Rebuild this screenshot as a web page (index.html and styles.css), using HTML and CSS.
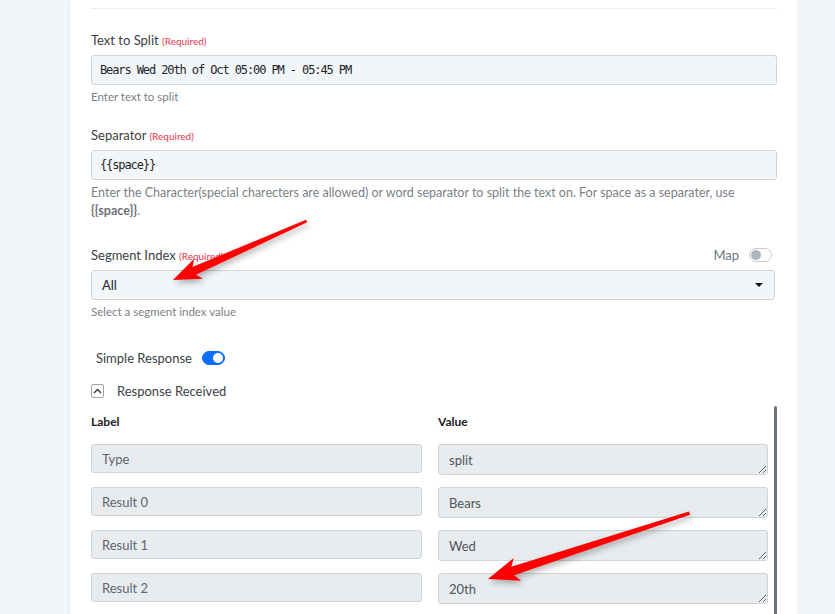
FILE: index.html
```html
<!DOCTYPE html>
<html lang="en">
<head>
  <meta charset="UTF-8">
  <meta name="viewport" content="width=device-width, initial-scale=1.0">
  <title>Text Splitter - Settings</title>
  <link rel="stylesheet" href="styles.css">
</head>
<body>
  <div class="panel">
    <div class="divider"></div>

    <div class="field">
      <div class="field-label">Text to Split <span class="req">(Required)</span></div>
      <div class="text-input mono">Bears Wed 20th of Oct 05:00 PM - 05:45 PM</div>
      <div class="hint">Enter text to split</div>
    </div>

    <div class="field field-sep">
      <div class="field-label">Separator <span class="req">(Required)</span></div>
      <div class="text-input mono">{{space}}</div>
      <div class="hint hint-long">Enter the Character(special charecters are allowed) or word separator to split the text on. For space as a separater, use <b>{{space}}</b>.</div>
    </div>

    <div class="field field-index">
      <div class="field-label label-row">
        <span>Segment Index <span class="req">(Required)</span></span>
        <span class="map">Map <span class="toggle"></span></span>
      </div>
      <div class="text-input select">All <span class="caret"></span></div>
      <div class="hint">Select a segment index value</div>
    </div>

    <div class="switch-row">
      Simple Response <span class="toggle on"></span>
    </div>

    <div class="collapse-row">
      <span class="chevron-box">
        <svg width="9" height="6" viewBox="0 0 9 6"><path d="M1 5 L4.5 1.5 L8 5" fill="none" stroke="#333" stroke-width="1.4"/></svg>
      </span>
      Response Received
    </div>

    <div class="response">
      <div class="response-grid">
        <div class="col-head">Label</div>
        <div class="col-head">Value</div>

        <div class="cell">Type</div>
        <textarea class="cell-value" readonly>split</textarea>

        <div class="cell">Result 0</div>
        <textarea class="cell-value" readonly>Bears</textarea>

        <div class="cell">Result 1</div>
        <textarea class="cell-value" readonly>Wed</textarea>

        <div class="cell">Result 2</div>
        <textarea class="cell-value" readonly>20th</textarea>
      </div>
      <div class="scroll-thumb"></div>
    </div>
  </div>

  <!-- callout arrows -->
  <svg class="arrows" width="835" height="614" viewBox="0 0 835 614">
    <g transform="translate(173 280) rotate(-23.8)">
      <polygon points="0,0 28,-11 23,-4 146,-1.4 146,1.4 23,4.5 28,11" fill="#ff0000"/>
    </g>
    <g transform="translate(488 579) rotate(-18.1)">
      <polygon points="0,0 31,-12 26,-4.5 212,-1.6 212,1.6 26,4.5 31,12" fill="#ff0000"/>
    </g>
  </svg>
</body>
</html>
```

FILE: styles.css
```css
body {
  margin: 0;
  position: relative;
  font-family: Lato, 'Open Sans', Arial, sans-serif;
  background: #f3f6f9;
  color: #3a3f44;
  overflow: hidden;
}

.panel {
  margin-left: 70px;
  width: 727px;
  min-height: 614px;
  box-sizing: border-box;
  padding: 8px 20px 0 21px;
  background: white;
  box-shadow: -1px 0 2px rgba(0,0,0,0.06);
}

.divider {
  height: 1px;
  background: #e6eef6;
  margin-bottom: 22px;
}

.field {
  margin-bottom: 21px;
}

.field-sep {
  margin-bottom: 26px;
}

.field-index {
  margin-bottom: 29px;
}

.field-label {
  font-size: 13px;
  line-height: 18px;
  height: 18px;
  margin-bottom: 6px;
  color: #3a3f44;
}

.req {
  font-size: 10px;
  color: #e2334d;
}

.label-row {
  display: flex;
  justify-content: space-between;
  align-items: center;
  padding-right: 5px;
}

.map {
  display: flex;
  align-items: center;
  gap: 10px;
  color: #6c7680;
}

.text-input {
  height: 30px;
  box-sizing: border-box;
  border: 1px solid #cfd4da;
  border-radius: 3px;
  background: #f3f6f9;
  padding: 0 8px;
  display: flex;
  align-items: center;
  color: #212529;
}

.mono {
  font-family: 'DejaVu Sans Mono', 'Liberation Mono', monospace;
  font-size: 12px;
  letter-spacing: -1.1px;
}

.select {
  justify-content: space-between;
  padding: 0 11px 0 10px;
  font-size: 13px;
  margin-right: 2px;
}

.caret {
  width: 0;
  height: 0;
  border-left: 4px solid transparent;
  border-right: 4px solid transparent;
  border-top: 4px solid #111;
}

.hint {
  font-size: 11.5px;
  line-height: 16px;
  margin-top: 4px;
  color: #7b7f84;
}

.hint-long {
  font-size: 12.5px;
  line-height: 18px;
}

.hint b {
  color: #6c7075;
}

/* switches */
.toggle {
  display: inline-block;
  position: relative;
  width: 21px;
  height: 12px;
  border: 1px solid #c6cbd0;
  border-radius: 8px;
  background: white;
}

.toggle::after {
  content: "";
  position: absolute;
  top: 1px;
  left: 1px;
  width: 10px;
  height: 10px;
  border-radius: 50%;
  background: #adb5bd;
}

.toggle.on {
  background: #0d6efd;
  border-color: #0d6efd;
}

.toggle.on::after {
  left: 10px;
  background: white;
}

.switch-row {
  display: flex;
  align-items: center;
  gap: 10px;
  height: 18px;
  padding-left: 5px;
  font-size: 13px;
  color: #3a3f44;
  margin-bottom: 15px;
}

.collapse-row {
  display: flex;
  align-items: center;
  gap: 13px;
  height: 18px;
  font-size: 13px;
  color: #3a3f44;
  margin-bottom: 6px;
}

.chevron-box {
  width: 11px;
  height: 12px;
  border: 1px solid #a0a4a8;
  border-radius: 2px;
  display: flex;
  align-items: center;
  justify-content: center;
}

/* response table */
.response {
  display: flex;
  align-items: flex-start;
}

.response-grid {
  display: grid;
  grid-template-columns: 331px 330px;
  column-gap: 16px;
  row-gap: 12px;
  width: 677px;
  padding-top: 7px;
  align-items: start;
}

.col-head {
  font-size: 12px;
  font-weight: bold;
  line-height: 18px;
  color: #222;
  margin-bottom: 1px;
}

.cell {
  height: 29px;
  box-sizing: border-box;
  border: 1px solid #cfd4da;
  border-radius: 3px;
  background: #e9ecef;
  padding: 0 10px;
  display: flex;
  align-items: center;
  font-size: 13px;
  color: #5d656d;
}

.cell-value {
  display: block;
  margin: 0;
  height: 31px;
  width: 330px;
  box-sizing: border-box;
  border: 1px solid #cfd4da;
  border-radius: 3px;
  background: #e9ecef;
  padding: 6px 10px;
  font-family: Lato, 'Open Sans', Arial, sans-serif;
  font-size: 13px;
  line-height: 18px;
  color: #4d555d;
  overflow: hidden;
  outline: none;
}

.scroll-thumb {
  width: 6px;
  height: 220px;
  margin-left: 6px;
  border-radius: 3px 3px 0 0;
  background: #6c757d;
}

.arrows {
  position: absolute;
  top: 0;
  left: 0;
  pointer-events: none;
  filter: drop-shadow(2px 3px 3px rgba(0,0,0,0.3));
}
```
